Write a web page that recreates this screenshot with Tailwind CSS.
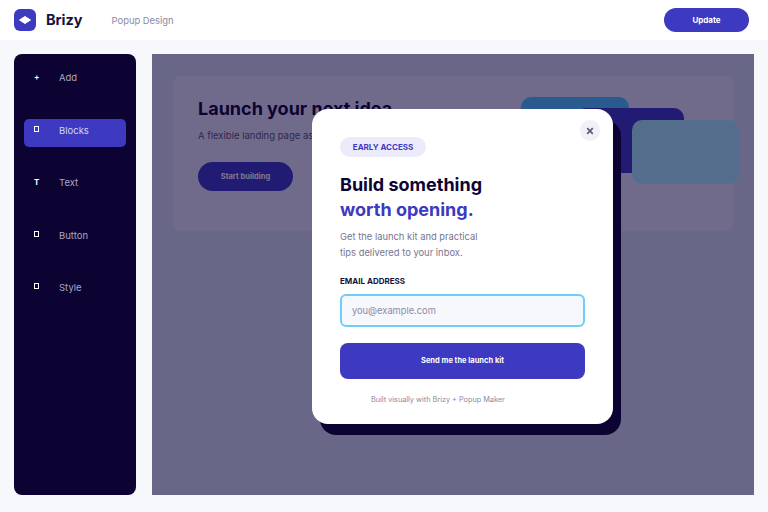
<!DOCTYPE html>
<html lang="en">
<head>
  <meta charset="UTF-8">
  <title>Brizy Popup Design</title>
  <script src="https://cdn.jsdelivr.net/npm/@tailwindcss/browser@4"></script>
</head>
<body class="w-[768px] h-[512px] overflow-hidden bg-[#f7f8fc] font-['Inter',sans-serif] antialiased">

  <header class="h-10 bg-white flex items-center pl-3.5 pr-[19px]">
    <div class="w-[22px] h-[22px] rounded-md bg-[#3d39c1] flex items-center justify-center">
      <svg width="12" height="8" viewBox="0 0 12 8"><path d="M6 .5 L11.5 4 L6 7.5 L.5 4 Z" fill="#fff" stroke="#fff" stroke-linejoin="round"/></svg>
    </div>
    <span class="ml-[10px] text-[14.5px] font-bold text-[#15123f]">Brizy</span>
    <span class="ml-[29px] pt-[3px] text-[9.4px] text-[#8a88a3]">Popup Design</span>
    <button class="ml-auto w-[85px] h-6 rounded-full bg-[#3d39c1] text-white text-[8px] font-bold">Update</button>
  </header>

  <main class="flex gap-4 pt-3.5 pl-3.5">
    <aside class="w-[122px] h-[441px] rounded-lg bg-[#0d0333] px-2.5 pt-3 flex flex-col gap-[24.6px] text-[9.5px] leading-[12px] text-[#aaa8c2]">
      <div class="h-7 flex rounded pl-2.5 pt-[6px]"><span class="w-[25px] -mt-[1px] text-white text-[8px] font-bold">+</span>Add</div>
      <div class="h-7 flex rounded-[5px] bg-[#3d39c1] pl-2.5 pt-[6px] text-[#d8d7f0]"><span class="w-[25px] pt-[1px]"><span class="block w-[5px] h-[6px] border border-white"></span></span>Blocks</div>
      <div class="h-7 flex rounded pl-2.5 pt-[6px]"><span class="w-[25px] -mt-[1px] text-white text-[8px] font-bold">T</span>Text</div>
      <div class="h-7 flex rounded pl-2.5 pt-[6px]"><span class="w-[25px] pt-[1px]"><span class="block w-[5px] h-[6px] border border-white"></span></span>Button</div>
      <div class="h-7 flex rounded pl-2.5 pt-[6px]"><span class="w-[25px] pt-[1px]"><span class="block w-[5px] h-[6px] border border-white"></span></span>Style</div>
    </aside>

    <section class="relative w-[602px] h-[441px] bg-[#d8e0f0] overflow-hidden">
      <div class="relative mt-[22px] mx-[21px] h-[155px] rounded-lg bg-[#ebe8f6] pl-[25px] pt-[21px]">
        <h1 class="text-[18px] leading-[24px] font-bold text-[#0d0333]">Launch your next idea</h1>
        <p class="mt-[8px] text-[9.5px] text-[#5a5770]">A flexible landing page assembled from simple blocks.</p>
        <button class="mt-[19px] w-[95px] h-[29px] rounded-full bg-[#3d39c1] text-white text-[7.5px] font-bold">Start building</button>
      </div>
      <div class="absolute left-[369px] top-[43px] w-[108px] h-[64px] rounded-[10px] bg-[#4ec6ff]"></div>
      <div class="absolute left-[424px] top-[54px] w-[108px] h-[65px] rounded-[10px] bg-[#3d39c1]"></div>
      <div class="absolute left-[480px] top-[66px] w-[107px] h-[64px] rounded-[10px] bg-[#adedfb]"></div>
      <div class="absolute inset-0 bg-[#0d0333]/55"></div>

      <div class="absolute left-[160px] top-[55px] w-[301px] h-[315px] rounded-[16px] bg-white shadow-[8px_11px_0_#0d0333] px-7 pt-7">
        <button class="absolute right-[13px] top-[11px] w-5 h-[21px] rounded-full bg-[#f0f0f6] flex items-center justify-center">
          <svg width="8" height="8" viewBox="0 0 8 8"><path d="M1.2 1.2 L6.8 6.8 M6.8 1.2 L1.2 6.8" stroke="#5d5b75" stroke-width="1.7"/></svg>
        </button>
        <span class="block w-[86px] h-5 leading-5 text-center rounded-full bg-[#ecebfb] text-[8px] font-bold text-[#3d39c1]">EARLY ACCESS</span>
        <h2 class="mt-[16px] text-[18px] leading-[24.5px] font-bold text-[#0d0333]">Build something<br><span class="text-[#3d39c1]">worth opening.</span></h2>
        <p class="mt-[7px] text-[9.4px] leading-[16px] text-[#77758f]">Get the launch kit and practical<br>tips delivered to your inbox.</p>
        <label class="block mt-[14px] text-[8px] font-bold text-[#15123f]">EMAIL ADDRESS</label>
        <div class="mt-[7px] h-[33px] rounded-md border-2 border-[#6fcdfa] bg-[#f6f8fc] pl-2.5 flex items-center text-[9.3px] text-[#8d8ba3]">you@example.com</div>
        <button class="mt-[16px] w-full h-9 rounded-lg bg-[#3d39c1] text-white text-[7.5px] font-bold">Send me the launch kit</button>
        <p class="mt-[16px] pl-[31px] text-[7.3px] text-[#8a88a3]">Built visually with Brizy + Popup Maker</p>
      </div>
    </section>
  </main>

</body>
</html>
